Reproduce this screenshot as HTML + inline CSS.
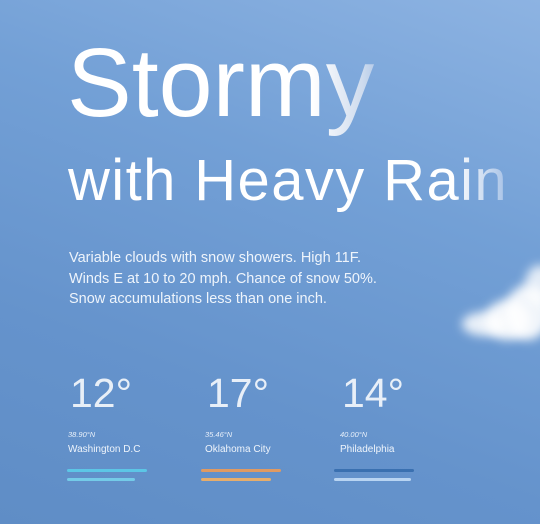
<!DOCTYPE html>
<html><head><style>
html,body{margin:0;padding:0}
body{width:540px;height:524px;overflow:hidden;position:relative;font-family:"Liberation Sans",sans-serif;color:#fff;
background:linear-gradient(200deg,#8db3e2 0%,#73a0d6 35%,#6593cc 70%,#5f8dc6 100%);}
.t1{position:absolute;left:67px;top:28px;font-size:97px;line-height:110px;letter-spacing:0;
background:linear-gradient(90deg,#fff 0,#fff 245px,#cfdcee 295px,#a9c3e6 315px);-webkit-background-clip:text;background-clip:text;color:transparent}
.t2{position:absolute;left:68px;top:148px;font-size:58px;line-height:66px;letter-spacing:1.4px;
background:linear-gradient(90deg,#fff 0,#fff 385px,#c8d9ef 420px,#a4c0e6 440px);-webkit-background-clip:text;background-clip:text;color:transparent}
.p{position:absolute;left:69px;top:248px;font-size:14.5px;line-height:20.5px;color:#eef4fb}
.c{position:absolute;top:370px}
.deg{font-size:41px;line-height:46px;margin-left:2px;color:rgba(255,255,255,.85)}
.lat{font-size:7.5px;font-style:italic;margin-top:14px;color:#e8f0fa}
.city{font-size:10px;margin-top:5px;color:#eef4fb}
.l1,.l2{height:3px;border-radius:2px;position:absolute}
.cloud{position:absolute;border-radius:50%;background:#fff;filter:blur(5px)}
</style></head><body>
<div class="cloud" style="left:462px;top:312px;width:45px;height:24px;opacity:.85"></div>
<div class="cloud" style="left:485px;top:300px;width:45px;height:40px;opacity:.9"></div>
<div class="cloud" style="left:505px;top:285px;width:45px;height:55px;opacity:.9"></div>
<div class="cloud" style="left:525px;top:265px;width:30px;height:40px;opacity:.8"></div>
<div class="t1">Stormy</div>
<div class="t2">with Heavy Rain</div>
<div class="p">Variable clouds with snow showers. High 11F.<br>Winds E at 10 to 20 mph. Chance of snow 50%.<br>Snow accumulations less than one inch.</div>
<div class="c" style="left:68px"><div class="deg">12°</div><div class="lat">38.90°N</div><div class="city">Washington D.C</div></div>
<div class="c" style="left:205px"><div class="deg">17°</div><div class="lat">35.46°N</div><div class="city">Oklahoma City</div></div>
<div class="c" style="left:340px"><div class="deg">14°</div><div class="lat">40.00°N</div><div class="city">Philadelphia</div></div>
<div class="l1" style="left:67px;top:469px;width:80px;background:#5cc6e6"></div>
<div class="l2" style="left:67px;top:478px;width:68px;background:#74cbe8"></div>
<div class="l1" style="left:201px;top:469px;width:80px;background:#e09a62"></div>
<div class="l2" style="left:201px;top:478px;width:70px;background:#e6ad6c"></div>
<div class="l1" style="left:334px;top:469px;width:80px;background:#3a70b0"></div>
<div class="l2" style="left:334px;top:478px;width:77px;background:#b8d4f2"></div>
</body></html>
